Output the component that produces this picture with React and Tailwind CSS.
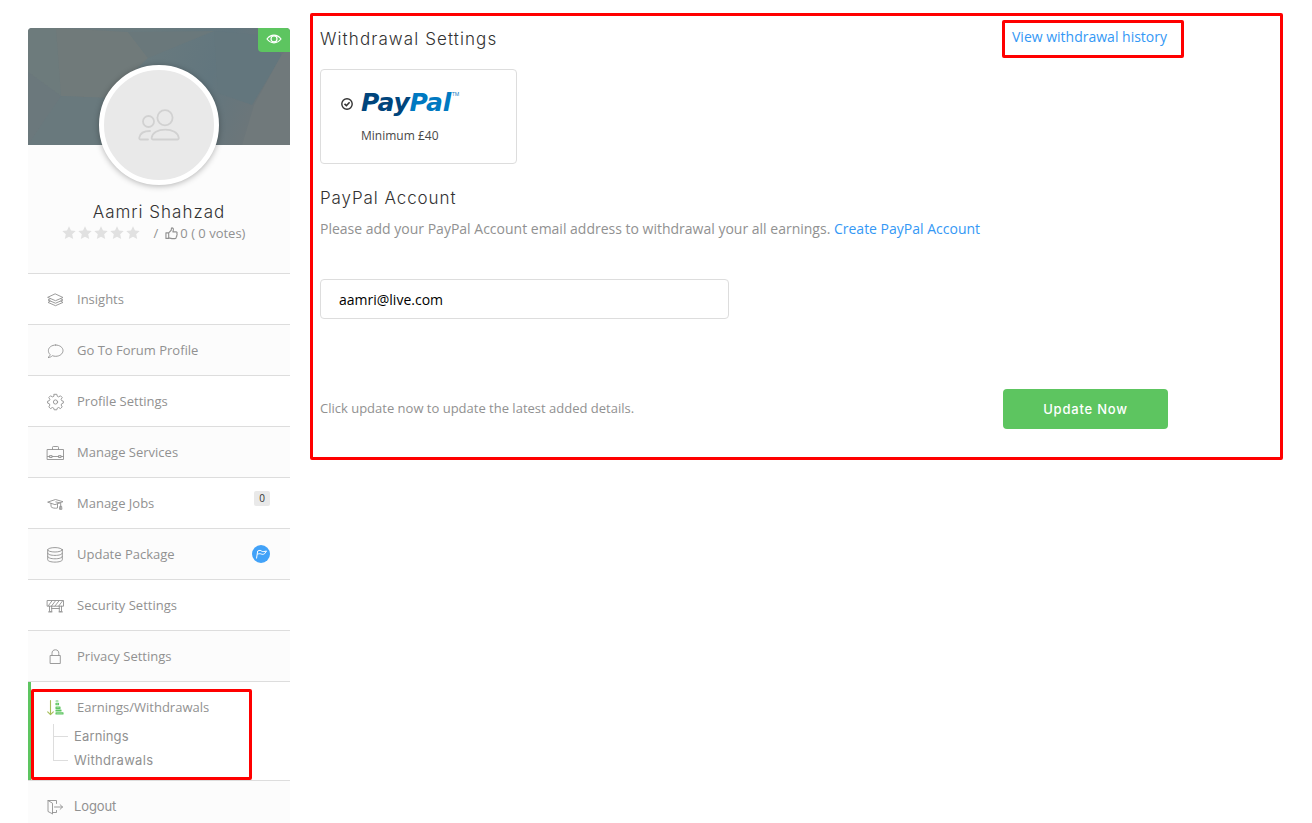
import React from "react";

const S = ({ children, className = "", w = 0.9 }) => (
  <svg viewBox="0 0 18 18" className={"block h-[18px] w-[18px] shrink-0 " + className} fill="none" stroke="currentColor" strokeWidth={w} strokeLinejoin="round" strokeLinecap="round">
    {children}
  </svg>
);

const icons = {
  layers: (
    <S w={0.9}>
      <path d="M9.500 3 17 6.500 9.500 9.700 2 6.500Z" />
      <path d="M4.200 7.800 2 9l7.500 3.200L17 9l-2.200-1.200M4.200 10.200 2 11.400l7.500 3.300 7.500-3.300-2.200-1.200" />
    </S>
  ),
  chat: (
    <S>
      <path d="M9.700 3c4.100 0 7.300 2.500 7.300 5.600s-3.200 5.700-7.300 5.700c-1.200 0-2.300-.2-3.300-.6-1 .9-2.300 1.800-4.400 1.900 1.300-1.100 2-2 2.100-3.200C2.900 11.400 2.400 10.100 2.400 8.600 2.400 5.500 5.600 3 9.700 3Z" />
    </S>
  ),
  gear: (
    <S>
      <circle cx="9.500" cy="9" r="2.100" />
      <path d="M8.200 1.300h2.600l.5 2 1.300.6 1.900-1.100 1.700 1.700-1.100 1.900.6 1.300 1.600.5v1.900l-1.600.6-.6 1.300 1.100 1.900-1.700 1.700-1.900-1.100-1.300.6-.5 1.700H8.200l-.5-1.700-1.300-.6-1.900 1.100-1.700-1.700 1.100-1.900-.6-1.300-1.700-.6V8.200l1.700-.5.6-1.300-1.100-1.900 1.700-1.700 1.900 1.100 1.300-.6Z" />
    </S>
  ),
  briefcase: (
    <S>
      <path d="M1.500 5.500h16v10h-16ZM6.500 5.300V3.300c0-.5.300-.8.8-.8h4.400c.5 0 .8.300.8.800v2M1.500 12.500h2.300M6.200 12.500h6.600M15.200 12.500h2.300M3.900 11.600h2.200v1.900H3.900ZM12.900 11.600h2.200v1.900h-2.200Z" />
    </S>
  ),
  cap: (
    <S>
      <path d="M2 7 9.500 4.500l7.500 2.200L9.300 9.500ZM5 8.400v3.300c1 1.300 4 1.900 6.500 1.300V9M9.800 6.900l4.900 1.200v5.800M13.900 14.300h2l-.3-3h-1.400Z" />
    </S>
  ),
  database: (
    <S>
      <ellipse cx="9" cy="3.800" rx="7.300" ry="2.200" />
      <path d="M1.700 3.800v10c0 1.300 3.200 2.300 7.300 2.300s7.300-1 7.300-2.300v-10M1.700 7.200c0 1.300 3.200 2.200 7.300 2.200s7.300-.9 7.300-2.200M1.700 10.500c0 1.300 3.200 2.300 7.300 2.300s7.300-1 7.300-2.300" />
    </S>
  ),
  barrier: (
    <S>
      <path d="M1.500 3.500h16v5.700h-16ZM2.500 8.500 6 3.800M5.500 9l4-5.200M9 9l4-5.200M12.700 9l3.800-5M3.500 9.200v5.500h2.200V9.200M13.300 9.200v5.500h2.200V9.200M5.700 11.500h7.600M2.500 14.900h3.500M13 14.900h3.500" />
    </S>
  ),
  lock: (
    <S>
      <path d="M4.500 7.500h9.800v8H4.500ZM6 7.400V5.300C6 3.200 7.200 1.800 9.400 1.800s3.400 1.400 3.400 3.500v2.100" />
    </S>
  ),
  sort: (
    <S className="text-[#5dc560]" w={1.1}>
      <path d="M4.500 1.500v14M1.700 12.800l2.800 2.900 2.800-2.900" stroke="#a5be58" />
      <path d="M10 2h2M10 4.300h2.500v1.400H10ZM10 8h4v1.400h-4ZM10 11h5v1h-5ZM10 13.800h7V15h-7Z" />
    </S>
  ),
  logout: (
    <S>
      <path d="M6.500 15.400V5.200L2 2.500v11l4.500 2.300ZM2 2.500h8.500v3M10.500 12.500v2h-4M8.500 9h8M14.100 6.700 16.500 9l-2.400 2.300" />
    </S>
  ),
};

const Star = () => (
  <svg viewBox="0 0 14 14" className="block h-[14px] w-[14px]" fill="#e1e1e1">
    <path d="m7 .3 2 4.300 4.700.5-3.500 3.200 1 4.800L7 10.700l-4.200 2.400 1-4.800L.3 5.100 5 4.600Z" />
  </svg>
);

const Row = ({ icon, label, shade, badge }) => (
  <li className={"flex h-[51px] items-center gap-[13px] border-t border-[#dddddd] pl-[18px] pr-5 " + (shade ? "bg-[#fcfcfc]" : "bg-white")}>
    <span className="mt-px">{icons[icon]}</span>
    <span className="text-[13px] leading-5">{label}</span>
    {badge}
  </li>
);

const Banner = () => (
  <svg viewBox="0 0 262 117" className="block h-[117px] w-[262px]" preserveAspectRatio="none">
    <defs>
      <linearGradient id="sky" x1="0" y1="0" x2="1" y2="0.2">
        <stop offset="0" stopColor="#6f7a7d" />
        <stop offset=".45" stopColor="#697a7e" />
        <stop offset=".75" stopColor="#62767e" />
        <stop offset="1" stopColor="#6d7679" />
      </linearGradient>
    </defs>
    <rect width="262" height="117" fill="url(#sky)" />
    <path d="M0 0h28l5 68L0 44Z" fill="#6d7b7c" />
    <path d="m28 0 72 4 20 26-42 40-45-2Z" fill="#707a7a" />
    <path d="m0 44 33 24L0 117Z" fill="#6b787c" />
    <path d="m33 68 45 2 12 47H0Z" fill="#69797d" />
    <path d="m100 4 86-1-66 27Z" fill="#6a787b" />
    <path d="m186 3 44 4 24 20-30 50-34-12Z" fill="#63767d" />
    <path d="m254 26 8-6v97h-48l12-40Z" fill="#70797b" />
  </svg>
);

export default function App() {
  return (
    <div className="flex h-[823px] w-[1312px] overflow-hidden bg-white pl-7 font-['Open_Sans',sans-serif] text-[#919191]">
      <aside className="mt-7 w-[262px] shrink-0">
        <div className="flex h-[245px] flex-col items-center bg-[#fcfcfc]">
          <div className="relative h-[117px] w-full overflow-hidden rounded-t-[4px]">
            <Banner />
            <span className="absolute right-0 top-0 flex h-6 w-8 items-center justify-center rounded-bl-[4px] bg-[#5dc560] text-white">
              <svg viewBox="0 0 16 12" className="-mt-[2px] h-3 w-4" fill="none" stroke="currentColor" strokeWidth="1.200">
                <path d="M1 6c2-2.600 4.400-3.800 7-3.800S13 3.400 15 6c-2 2.600-4.400 3.800-7 3.800S3 8.600 1 6Z" />
                <circle cx="8" cy="5.900" r="3" />
              </svg>
            </span>
          </div>
          <div className="relative -mt-20 flex h-[120px] w-[120px] shrink-0 items-center justify-center rounded-full border-[5px] border-white bg-[#e9e9e9] shadow-[0_1px_6px_rgba(0,0,0,0.3)]">
            <svg viewBox="0 0 42 32" className="h-8 w-[42px]" fill="none" stroke="#d1d1d1" strokeWidth="1.800" strokeLinecap="round" strokeLinejoin="round">
              <circle cx="27" cy="8.800" r="7.600" />
              <circle cx="10.500" cy="12.500" r="5.500" />
              <path d="M15.300 30.500c-1.300 0-1.800-.7-1.600-1.900.8-4.700 6-8 13.500-8s12.700 3.300 13.500 8c.2 1.200-.3 1.900-1.600 1.900ZM10 30.500H2.800c-1.200 0-1.700-.7-1.500-1.900.7-4 4.500-6.600 10.700-6.600" />
            </svg>
          </div>
          <h2 className="mt-[15px] whitespace-nowrap font-['Inter',sans-serif] text-[17px] font-light leading-6 tracking-[1px] text-[#323232]">Aamri Shahzad</h2>
          <div className="-mt-px mr-[11px] flex h-5 items-center text-[13px] leading-5">
            <span className="flex gap-[2px]"><Star /><Star /><Star /><Star /><Star /></span>
            <span className="ml-[14px]">/</span>
            <svg viewBox="0 0 14 14" className="ml-[7px] h-[13px] w-[13px]" fill="none" stroke="currentColor" strokeWidth="1.200" strokeLinejoin="round">
              <path d="M4 6.300 6.700 3.500 7 1c1.600-.3 2.300.8 2 2.200L8.500 5.300h3.300c1.300 0 1.600 1.200.9 1.900.6.700.4 1.500-.1 1.900.3.700.1 1.300-.5 1.700.1 1-.4 1.700-1.500 1.700H7.500L4 11.700M1 6.300h3v6H1Z" />
            </svg>
            <span className="ml-[2px] whitespace-nowrap">0 ( 0 votes)</span>
          </div>
        </div>

        <ul>
          <Row icon="layers" label="Insights" />
          <Row icon="chat" label="Go To Forum Profile" shade />
          <Row icon="gear" label="Profile Settings" />
          <Row icon="briefcase" label="Manage Services" shade />
          <Row icon="cap" label="Manage Jobs" badge={<span className="-mt-[9px] ml-auto flex h-[15px] w-4 items-center justify-center rounded-[2px] bg-[#e9e9e9] text-[10px] text-[#323232]">0</span>} />
          <Row
            icon="database"
            label="Update Package"
            shade
            badge={
              <span className="ml-auto flex h-[18px] w-[18px] items-center justify-center rounded-full bg-[#42a2f8] text-white">
                <svg viewBox="0 0 12 12" className="h-3 w-3" fill="none" stroke="currentColor" strokeWidth="1" strokeLinejoin="round">
                  <path d="M1.500 10.500 2.700 3c2-1 3.200-.6 4 .2 1.200.7 2.700.3 4.800-.2L9.500 5.800c-1.200.7-2.300.7-3.300.2-1.200-.5-2.500-.3-3.900.2" />
                </svg>
              </span>
            }
          />
          <Row icon="barrier" label="Security Settings" />
          <Row icon="lock" label="Privacy Settings" shade />
          <li className="relative h-[99px] border-t border-[#dddddd] bg-white">
            <div className="h-[98px] border-l-[3px] border-[#5dc560] pl-[15px]">
              <div className="flex h-[50px] items-center gap-[13px]">
                <span className="mt-px">{icons.sort}</span>
                <span className="text-[13px] leading-5">Earnings/Withdrawals</span>
              </div>
              <ul className="-mt-[8px] ml-[7px] font-['Inter',sans-serif] text-[13px] tracking-[0.300px]">
                <li className="flex h-6 border-l border-[#dddddd]">
                  <span className="mt-[12px] h-px w-[14px] bg-[#dddddd]" />
                  <span className="ml-[6px] leading-6 tracking-[0.150px]">Earnings</span>
                </li>
                <li className="flex h-6">
                  <span className="h-[13px] w-[15px] border-b border-l border-[#dddddd]" />
                  <span className="ml-[6px] leading-6">Withdrawals</span>
                </li>
              </ul>
            </div>
            <span className="absolute left-[3px] top-[7px] h-[91px] w-[221px] rounded-[2px] border-[3px] border-[#ff0000]" />
          </li>
          <li className="flex h-[51px] items-center gap-[10px] border-t border-[#dddddd] bg-[#fcfcfc] pl-[18px]">
            <span className="mt-px">{icons.logout}</span>
            <span className="font-['Inter',sans-serif] text-[13px] leading-5 tracking-[-0.100px]">Logout</span>
          </li>
        </ul>
      </aside>

      <main className="ml-5 mt-[13px] h-[447px] w-[973px] shrink-0 rounded-[2px] border-[3px] border-[#ff0000] pl-[7px]">
        <div className="flex h-[53px] items-start justify-between pr-[96px]">
          <h1 className="mt-[11px] whitespace-nowrap font-['Inter',sans-serif] text-[17px] font-light leading-6 tracking-[1.100px] text-[#323232]">Withdrawal Settings</h1>
          <a className="mt-[4px] flex h-[38px] w-[182px] items-center rounded-[2px] border-[3px] border-[#ff0000] pb-[5px] pl-[7px] text-[14px] text-[#3498f5]">View withdrawal history</a>
        </div>

        <label className="flex h-[95px] w-[197px] rounded-[4px] border border-[#dddddd] pl-5 pt-[21px]">
          <svg viewBox="0 0 12 12" className="mt-[7px] h-3 w-3" fill="none" stroke="#323232" strokeWidth="1.400">
            <circle cx="6" cy="6" r="5.200" />
            <path d="m3.500 5.900 1.900 1.800 3.200-3.400" strokeWidth="1.600" />
          </svg>
          <span className="ml-[7px]">
            <span className="flex h-[35px] items-start">
              <span className="ml-px whitespace-nowrap font-['DejaVu_Sans',sans-serif] text-[25px] font-bold italic leading-6 tracking-[-0.200px] text-[#00457c]">Pay<span className="text-[#0079c1]">Pal</span></span>
              <span className="ml-px text-[5px] leading-[6px] text-[#0079c1]">TM</span>
            </span>
            <span className="ml-px block text-[12px] leading-5 text-[#484848]">Minimum £40</span>
          </span>
        </label>

        <h2 className="mt-[22px] font-['Inter',sans-serif] text-[17px] font-light leading-6 tracking-[0.920px] text-[#323232]">PayPal Account</h2>
        <p className="mt-[8px] text-[14px] leading-[22px]">
          Please add your PayPal Account email address to withdrawal your all earnings. <a className="text-[#3498f5]">Create PayPal Account</a>
        </p>

        <input type="text" defaultValue="aamri@live.com" className="mt-[39px] block h-10 w-[409px] rounded-[4px] border border-[#dddddd] px-[18px] text-[14px] text-black outline-none" />

        <div className="mt-[70px] flex h-10 items-center justify-between pr-[112px]">
          <p className="text-[13px]">Click update now to update the latest added details.</p>
          <button className="h-10 w-[165px] rounded-[4px] bg-[#5dc560] pt-px font-['Inter',sans-serif] text-[13px] font-medium tracking-[0.800px] text-white">Update Now</button>
        </div>
      </main>
    </div>
  );
}
